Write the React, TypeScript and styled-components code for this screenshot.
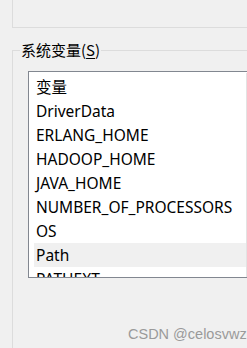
import styled, { createGlobalStyle } from "styled-components";

const GlobalStyle = createGlobalStyle`
  html, body {
    margin: 0;
    padding: 0;
    background: #f0f0f0;
    overflow: hidden;
  }
  body {
    font-family: "Noto Sans", "Noto Sans CJK SC", sans-serif;
    color: #000;
  }
`;

const vars = [
  "变量",
  "DriverData",
  "ERLANG_HOME",
  "HADOOP_HOME",
  "JAVA_HOME",
  "NUMBER_OF_PROCESSORS",
  "OS",
  "Path",
  "PATHEXT",
];

const App = () => {
  return (
    <Page>
      <GlobalStyle />
      <UserPanel />
      <Group>
        <Legend>
          系统变量(<u>S</u>)
        </Legend>
        <ListBox>
          <Rows>
            {vars.map((v) => (
              <Row key={v} selected={v === "Path"}>
                {v}
              </Row>
            ))}
          </Rows>
          <Scrollbar />
        </ListBox>
      </Group>
      <Watermark>CSDN @celosvwz</Watermark>
    </Page>
  );
};

export default App;

const Page = styled.div`
  position: relative;
  width: 247px;
  height: 348px;
  overflow: hidden;
`;

const UserPanel = styled.div`
  margin-left: 12px;
  height: 27px;
  border-left: 1px solid #dcdcdc;
  border-bottom: 1px solid #dcdcdc;
`;

const Group = styled.fieldset`
  margin: 12px 0 0 12px;
  padding: 0;
  height: 330px;
  border: 1px solid #dcdcdc;
  border-right: none;
  border-bottom: none;
`;

const Legend = styled.legend`
  margin-left: 7px;
  padding: 0 1px;
  font-size: 15px;
  line-height: 20px;
  font-family: "Noto Sans CJK SC", "Noto Sans", sans-serif;

  u {
    text-underline-offset: 2px;
  }
`;

const ListBox = styled.div`
  margin: 11px 0 0 15px;
  height: 205px;
  display: flex;
  background: #fff;
  border: 1px solid #828790;
  border-right: none;
  overflow: hidden;
`;

const Rows = styled.div`
  width: 212px;
  flex: none;
  padding: 3px 0 0 5px;
`;

const Row = styled.div<{ selected?: boolean }>`
  height: 24px;
  line-height: 24px;
  padding-left: 2px;
  font-size: 15.5px;
  white-space: nowrap;
  background: ${(p) => (p.selected ? "#f0f0f0" : "transparent")};
`;

const Scrollbar = styled.div`
  flex: 1;
  margin-top: 1px;
  background: #f0f0f0;
  border-left: 1px solid #e3e3e3;
`;

const Watermark = styled.div`
  position: absolute;
  left: 128px;
  top: 326px;
  font-family: "Liberation Sans", Arial, sans-serif;
  font-size: 14.5px;
  color: #9a9a9a;
  white-space: nowrap;
`;
